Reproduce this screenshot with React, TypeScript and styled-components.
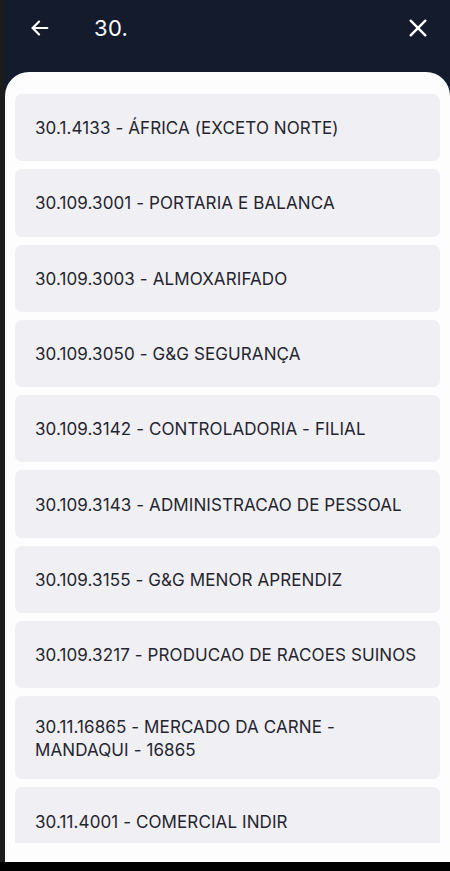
import React from "react";
import styled, { createGlobalStyle } from "styled-components";

const Global = createGlobalStyle`
  html, body { margin: 0; padding: 0; background: #1c1c1c; }
  body { font-family: "Inter", "Liberation Sans", sans-serif; }
  * { box-sizing: border-box; }
`;

const Screen = styled.div`
  margin-left: 5px;
  width: 445px;
  height: 871px;
  display: flex;
  flex-direction: column;
  background: #141b2d;
`;

const Header = styled.header`
  height: 72px;
  flex: none;
  display: flex;
  align-items: flex-start;
  padding: 14px 16px 0 19px;
`;

const IconButton = styled.button`
  width: 32px;
  height: 28px;
  border: 0;
  background: none;
  padding: 0;
  display: flex;
  align-items: center;
  justify-content: center;
  color: #ffffff;
`;

const Title = styled.div`
  flex: 1;
  margin-left: 38px;
  color: #ffffff;
  font-size: 22px;
  line-height: 28px;
  letter-spacing: 0.3px;
`;

const Panel = styled.main`
  flex: 1;
  background: #fdfdfd;
  border-radius: 24px 24px 0 0;
  padding: 22px 10px 19px 10px;
  display: flex;
  flex-direction: column;
  min-height: 0;
`;

const List = styled.div`
  flex: 1;
  overflow: hidden;
  display: flex;
  flex-direction: column;
  gap: 8px;
`;

const Card = styled.div`
  flex: none;
  min-height: 67.3px;
  display: flex;
  align-items: center;
  padding: 18.5px 20px 18.5px 20px;
  background: #efeff4;
  border-radius: 7px;
  color: #25252f;
  font-size: 17px;
  line-height: 23px;
  letter-spacing: 0.1px;
`;

const CardText = styled.span`
  display: block;
  transform: translateY(1px);
`;

const BottomBar = styled.div`
  height: 9px;
  flex: none;
  background: #000;
  margin-left: -5px;
`;

const items = [
  "30.1.4133 - ÁFRICA (EXCETO NORTE)",
  "30.109.3001 - PORTARIA E BALANCA",
  "30.109.3003 - ALMOXARIFADO",
  "30.109.3050 - G&G SEGURANÇA",
  "30.109.3142 - CONTROLADORIA - FILIAL",
  "30.109.3143 - ADMINISTRACAO DE PESSOAL",
  "30.109.3155 - G&G MENOR APRENDIZ",
  "30.109.3217 - PRODUCAO DE RACOES SUINOS",
  "30.11.16865 - MERCADO DA CARNE - MANDAQUI - 16865",
  "30.11.4001 - COMERCIAL INDIR",
];

export default function App() {
  return (
    <>
      <Global />
      <Screen>
        <Header>
          <IconButton aria-label="Voltar">
            <svg width="22" height="22" viewBox="0 0 24 24" fill="none" stroke="currentColor" strokeWidth="2.4" strokeLinecap="round" strokeLinejoin="round">
              <path d="M20 12H4" />
              <path d="M11 5l-7 7 7 7" />
            </svg>
          </IconButton>
          <Title>30.</Title>
          <IconButton aria-label="Fechar">
            <svg width="22" height="22" viewBox="0 0 24 24" fill="none" stroke="currentColor" strokeWidth="2.6" strokeLinecap="round">
              <path d="M4 4l16 16" />
              <path d="M20 4L4 20" />
            </svg>
          </IconButton>
        </Header>
        <Panel>
          <List>
            {items.map((t) => (
              <Card key={t}>
                <CardText>{t}</CardText>
              </Card>
            ))}
          </List>
        </Panel>
        <BottomBar />
      </Screen>
    </>
  );
}
